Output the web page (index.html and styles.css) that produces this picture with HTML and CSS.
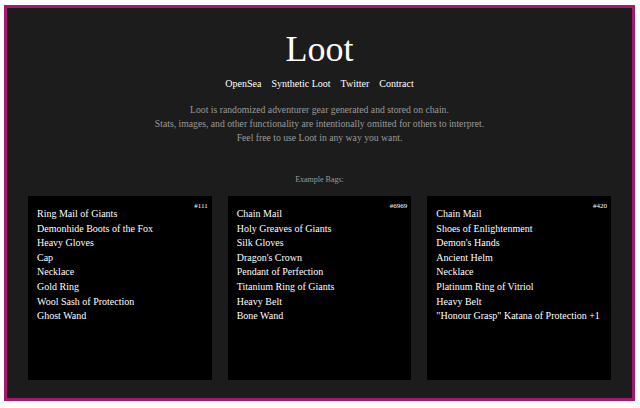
FILE: index.html
```html
<!DOCTYPE html>
<html lang="en">

<head>
    <meta charset="UTF-8">
    <meta name="viewport" content="width=device-width, initial-scale=1.0">
    <title>Loot</title>
    <link rel="stylesheet" href="styles.css">
</head>

<body>
    <div class="frame">
        <header class="hero">
            <h1>Loot</h1>
            <nav class="links">
                <a href="#">OpenSea</a>
                <a href="#">Synthetic Loot</a>
                <a href="#">Twitter</a>
                <a href="#">Contract</a>
            </nav>
            <p class="about">
                Loot is randomized adventurer gear generated and stored on chain.<br>
                Stats, images, and other functionality are intentionally omitted for others to interpret.<br>
                Feel free to use Loot in any way you want.
            </p>
        </header>

        <p class="bags-title">Example Bags:</p>

        <div class="bags">
            <div class="bag">
                <span class="bag-id">#111</span>
                <ul>
                    <li>Ring Mail of Giants</li>
                    <li>Demonhide Boots of the Fox</li>
                    <li>Heavy Gloves</li>
                    <li>Cap</li>
                    <li>Necklace</li>
                    <li>Gold Ring</li>
                    <li>Wool Sash of Protection</li>
                    <li>Ghost Wand</li>
                </ul>
            </div>
            <div class="bag">
                <span class="bag-id">#6969</span>
                <ul>
                    <li>Chain Mail</li>
                    <li>Holy Greaves of Giants</li>
                    <li>Silk Gloves</li>
                    <li>Dragon's Crown</li>
                    <li>Pendant of Perfection</li>
                    <li>Titanium Ring of Giants</li>
                    <li>Heavy Belt</li>
                    <li>Bone Wand</li>
                </ul>
            </div>
            <div class="bag">
                <span class="bag-id">#420</span>
                <ul>
                    <li>Chain Mail</li>
                    <li>Shoes of Enlightenment</li>
                    <li>Demon's Hands</li>
                    <li>Ancient Helm</li>
                    <li>Necklace</li>
                    <li>Platinum Ring of Vitriol</li>
                    <li>Heavy Belt</li>
                    <li>"Honour Grasp" Katana of Protection +1</li>
                </ul>
            </div>
        </div>
    </div>
</body>

</html>
```

FILE: styles.css
```css
html,
body {
    height: 100%;
}

body {
    margin: 0;
    padding: 5px 5px 7px 4px;
    box-sizing: border-box;
    background-color: #ffffff;
    font-family: 'Liberation Serif', 'DejaVu Serif', serif;
}

.frame {
    height: 100%;
    box-sizing: border-box;
    border: 3px solid #a3196c;
    background-color: #1c1c1c;
    color: #ffffff;
}

.hero {
    text-align: center;
    padding-top: 19px;
}

h1 {
    margin: 0;
    font-size: 36px;
    font-weight: normal;
    line-height: 44px;
}

.links {
    display: flex;
    justify-content: center;
    gap: 10px;
    margin-top: 6px;
    line-height: 13px;
}

.links a {
    color: #ffffff;
    text-decoration: none;
    font-size: 10px;
}

.about {
    margin: 13px 0 0;
    color: #9a9a9a;
    font-size: 9.7px;
    line-height: 14px;
}

.bags-title {
    margin: 30px 0 0;
    text-align: center;
    color: #9a9a9a;
    font-size: 8px;
}

.bags {
    display: grid;
    grid-template-columns: repeat(3, 1fr);
    gap: 16px;
    padding: 0 21px;
    margin-top: 12px;
}

.bag {
    position: relative;
    aspect-ratio: 1;
    background-color: #000000;
    padding: 11px 9px;
    box-sizing: border-box;
}

.bag-id {
    position: absolute;
    top: 6px;
    right: 4px;
    font-size: 7px;
}

/* item names, one per line like the bag svg */
.bag ul {
    list-style: none;
    margin: 0;
    padding: 0;
    font-size: 10px;
    line-height: 14.6px;
}
```
